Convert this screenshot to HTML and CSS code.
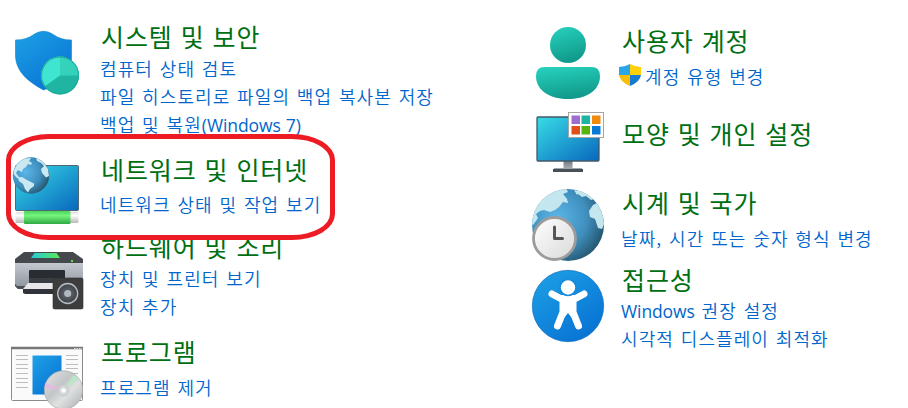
FILE: index.html
```html
<!DOCTYPE html>
<html lang="ko">
<head>
    <meta charset="UTF-8">
    <meta name="viewport" content="width=device-width, initial-scale=1.0">
    <title>제어판</title>
    <link rel="stylesheet" href="styles.css">
</head>
<body>

    <div class="panel">
        <div class="column">
            <div class="item system">
                <svg class="icon" viewBox="0 20 96 125">
                    <defs>
                        <linearGradient id="blue" x1="0" y1="0" x2="0.7" y2="1">
                            <stop offset="0" stop-color="#1ea2e6"/>
                            <stop offset="1" stop-color="#0873d4"/>
                        </linearGradient>
                    </defs>
                    <path d="M15.500 40Q26 40 33 35Q43.500 27.500 54 35Q61 40 71.500 40V60C71.500 77 58 85 43.500 90C29 82 15.500 72 15.500 55Z" fill="url(#blue)" stroke="#1181c9" stroke-width=".6"/>
                    <circle cx="60" cy="75.500" r="19" fill="#20b5a2"/>
                    <path d="M60 75.500L44.500 86.500A19 19 0 0 1 60 56.500Z" fill="#3fe5d0"/>
                    <path d="M60 75.500V56.500A19 19 0 0 1 79 75.500Z" fill="#34d1bb"/>
                    <circle cx="60" cy="75.500" r="18.500" fill="none" stroke="#1ba797"/>
                </svg>
                <div class="text">
                    <h2>시스템 및 보안</h2>
                    <a href="#">컴퓨터 상태 검토</a>
                    <a href="#">파일 히스토리로 파일의 백업 복사본 저장</a>
                    <a href="#">백업 및 복원<span class="latin">(Windows 7)</span></a>
                </div>
            </div>

            <div class="item network">
                <svg class="icon" viewBox="0 145 96 87">
                    <defs>
                        <linearGradient id="screen" x1="0" y1="0" x2="1" y2="1">
                            <stop offset="0" stop-color="#38dce6"/>
                            <stop offset="1" stop-color="#0867bd"/>
                        </linearGradient>
                        <linearGradient id="cable" x1="0" y1="0" x2="0" y2="1">
                            <stop offset="0" stop-color="#4fd45b"/>
                            <stop offset=".35" stop-color="#74f47c"/>
                            <stop offset="1" stop-color="#2fa945"/>
                        </linearGradient>
                        <linearGradient id="plug" x1="0" y1="0" x2="0" y2="1">
                            <stop offset="0" stop-color="#ddd"/>
                            <stop offset=".3" stop-color="#fff"/>
                            <stop offset="1" stop-color="#b8b8b8"/>
                        </linearGradient>
                        <radialGradient id="sea" cx=".35" cy=".4" r=".75">
                            <stop offset="0" stop-color="#5bb6e8"/>
                            <stop offset=".55" stop-color="#3f8fbd"/>
                            <stop offset="1" stop-color="#1e485d"/>
                        </radialGradient>
                    </defs>
                    <rect x="15.500" y="165.500" width="63" height="45" rx="1" fill="url(#screen)" stroke="#4c6873"/>
                    <rect x="15.500" y="212" width="63" height="11" rx="1.500" fill="url(#plug)"/>
                    <rect x="24" y="211" width="46.500" height="13" rx="1" fill="url(#cable)"/>
                    <circle cx="31" cy="175.500" r="18.200" fill="url(#sea)"/>
                    <path d="M14 170Q17 162 25 158.500L31 158L29 161L32 163L31 165L28 164L26 167L23 169L22 172L18 170L16 173L18 176L20 178L17 178L13.500 174ZM18 177.500L22 177L27 180L34 183.500L34 186L30 189L28 192.500L25 189L23 184L19 181Z" fill="#c9e8f2"/>
                    <path d="M36 158Q44 161 48 169L49 176L46 177.500L42 173L41 169L44 166L41 163L37 161Z" fill="#c9e8f2"/>
                </svg>
                <div class="text">
                    <h2>네트워크 및 인터넷</h2>
                    <a href="#">네트워크 상태 및 작업 보기</a>
                </div>
                <div class="highlight"></div>
            </div>

            <div class="item hardware">
                <svg class="icon" viewBox="0 232 96 98">
                    <defs>
                        <linearGradient id="metal" x1="0" y1="0" x2="0" y2="1">
                            <stop offset="0" stop-color="#c4c9d0"/>
                            <stop offset="1" stop-color="#8b919b"/>
                        </linearGradient>
                        <linearGradient id="glass" x1="0" y1="0" x2="1" y2="0">
                            <stop offset="0" stop-color="#26ccd9"/>
                            <stop offset="1" stop-color="#5be557"/>
                        </linearGradient>
                    </defs>
                    <path d="M15 263H83V287L80 289H18L15 286Z" fill="url(#metal)"/>
                    <path d="M24 252H73L83 259V263H15V259Z" fill="#45494e"/>
                    <path d="M15 284V286L18 289H28V286H17Z" fill="#4b4f55"/>
                    <path d="M34.500 253H56.500L60 258H31Z" fill="url(#glass)"/>
                    <rect x="71" y="260" width="2" height="2" fill="#5be33a"/>
                    <rect x="29" y="270" width="36" height="17" rx="1" fill="#292c31"/>
                    <rect x="29" y="278" width="36" height="6" fill="#3a3d43"/>
                    <path d="M28 283H60V289H23Z" fill="#e8e8ea"/>
                    <path d="M23 289H62V294H25L23 293Z" fill="#30343a"/>
                    <rect x="53" y="278" width="30" height="31" rx="1.500" fill="#3e3d3e" stroke="#303030" stroke-width=".6"/>
                    <circle cx="67.700" cy="293.500" r="10" fill="#484b50" stroke="#b6bec7" stroke-width="1.300"/>
                    <circle cx="67.700" cy="293.500" r="6.500" fill="#53575d"/>
                    <circle cx="67.700" cy="293.500" r="3.600" fill="#afb8c2"/>
                </svg>
                <div class="text">
                    <h2>하드웨어 및 소리</h2>
                    <a href="#">장치 및 프린터 보기</a>
                    <a href="#">장치 추가</a>
                </div>
            </div>

            <div class="item programs">
                <svg class="icon" viewBox="0 330 96 78">
                    <defs>
                        <linearGradient id="disc" x1="0" y1="0" x2="1" y2="1">
                            <stop offset="0" stop-color="#e4e6e6"/>
                            <stop offset=".4" stop-color="#c3c6c7"/>
                            <stop offset=".6" stop-color="#dfe1e1"/>
                            <stop offset="1" stop-color="#a9adaf"/>
                        </linearGradient>
                    </defs>
                    <rect x="11.500" y="347.500" width="71" height="53" rx="1" fill="#fafafa" stroke="#8b8b8b"/>
                    <path d="M11 348H83" stroke="#777" stroke-width="2.500"/>
                    <path d="M74 348.500H82" stroke="#ddd" stroke-dasharray="1.500 1"/>
                    <path d="M16 355.500H28M16 359.500H28M16 364.500H28M16 368.500H28M16 373.500H28M16 378.500H28M16 382.500H28M16 387.500H28M66 355.500H78M66 359.500H78M66 364.500H78M66 368.500H78M66 373.500H78" stroke="#bdbdbd"/>
                    <rect x="32.500" y="355.500" width="29" height="39" fill="url(#blue)"/>
                    <circle cx="63.500" cy="390" r="19.200" fill="url(#disc)" stroke="#a5a7a8" stroke-width=".7"/>
                    <path d="M63.500 390L45.500 383L44.500 388Z" fill="#e6b9e1"/>
                    <path d="M63.500 390L74 375L78 379Z" fill="#b7e8c4"/>
                    <circle cx="63.500" cy="390.500" r="5.500" fill="#d4d6d7" stroke="#bfc1c2" stroke-width=".7"/>
                    <circle cx="63.500" cy="390.500" r="2.300" fill="#fff"/>
                </svg>
                <div class="text">
                    <h2>프로그램</h2>
                    <a href="#">프로그램 제거</a>
                </div>
            </div>
        </div>

        <div class="column">
            <div class="item accounts">
                <svg class="icon" viewBox="521 20 96 83">
                    <defs>
                        <linearGradient id="teal" x1="0" y1="0" x2=".3" y2="1">
                            <stop offset="0" stop-color="#28d3bf"/>
                            <stop offset="1" stop-color="#119b8c"/>
                        </linearGradient>
                    </defs>
                    <circle cx="568" cy="45" r="18" fill="url(#teal)"/>
                    <path d="M544.500 67H591.500Q600 67 600 76C600 92 584 99 568 99S536 92 536 76Q536 67 544.500 67Z" fill="url(#teal)"/>
                </svg>
                <div class="text">
                    <h2>사용자 계정</h2>
                    <a href="#" class="admin">
                        <svg class="uac" viewBox="0 0 22 22">
                            <path d="M0 3Q6 3 11 0V11H0Z" fill="#2aa5e5"/>
                            <path d="M11 0Q16 3 22 3V11H11Z" fill="#ffcf08"/>
                            <path d="M0 11H11V22Q1 18 0 11Z" fill="#fabd0a"/>
                            <path d="M11 11H22Q21 18 11 22Z" fill="#147bd1"/>
                        </svg>
                        계정 유형 변경
                    </a>
                </div>
            </div>

            <div class="item appearance">
                <svg class="icon" viewBox="521 103 96 82">
                    <defs>
                        <linearGradient id="stand" x1="0" y1="0" x2="0" y2="1">
                            <stop offset="0" stop-color="#737b83"/>
                            <stop offset="1" stop-color="#b1b7bd"/>
                        </linearGradient>
                    </defs>
                    <rect x="563.500" y="161" width="9" height="9" fill="url(#stand)"/>
                    <path d="M553 169H583V172H553Z" fill="#484f55"/>
                    <path d="M554 168.500H582" stroke="#9da4aa"/>
                    <rect x="537" y="117" width="62" height="44" rx="1" fill="url(#screen)" stroke="#425a69" stroke-width="1.300"/>
                    <rect x="568.500" y="112.500" width="35" height="25" fill="#fff" stroke="#a5a5a5"/>
                    <path d="M571.500 115.500h8.500v8.500h-8.500z" fill="#9d6dd0"/>
                    <path d="M581.500 115.500h8.500v8.500h-8.500z" fill="#1fb4a2"/>
                    <path d="M592 115.500h8.500v8.500H592z" fill="#f08a0c"/>
                    <path d="M571.500 126h8.500v8.500h-8.500z" fill="#e05018"/>
                    <path d="M581.500 126h8.500v8.500h-8.500z" fill="#57b30d"/>
                    <path d="M592 126h8.500v8.500H592z" fill="#0879d4"/>
                </svg>
                <div class="text">
                    <h2>모양 및 개인 설정</h2>
                </div>
            </div>

            <div class="item clock">
                <svg class="icon" viewBox="521 185 96 79">
                    <defs>
                        <linearGradient id="dial" x1="0" y1="0" x2="1" y2="1">
                            <stop offset="0" stop-color="#fff"/>
                            <stop offset="1" stop-color="#d9d9d9"/>
                        </linearGradient>
                        <clipPath id="round"><circle cx="568" cy="225" r="36"/></clipPath>
                    </defs>
                    <circle cx="568" cy="225" r="36" fill="url(#sea)"/>
                    <g clip-path="url(#round)" fill="#c4e6ef">
                        <path d="M531 224Q534 206 546 195L556 190L566 188L568 192L563 194L567 199L568 203L563 202L559 207L555 210L550 212L547 211L544 210L540 211L536 214L538 218L536 221L533 225Z"/>
                        <path d="M578 194L582 197L586 196L591 200L595 199L597 203L593 205L589 211L590 217L595 219L598 228L602 229L605 222L603 205L594 194L583 188L578 190Z"/>
                        <path d="M574 190L580 191L577 195ZM556 196L560 194L562 197L558 199Z"/>
                    </g>
                    <circle cx="554.500" cy="238.500" r="21" fill="url(#dial)" stroke="#9c9c9c" stroke-width="2.800"/>
                    <path d="M554.500 227V238.500H562.500" fill="none" stroke="#555" stroke-width="3" stroke-linecap="round" stroke-linejoin="round"/>
                </svg>
                <div class="text">
                    <h2>시계 및 국가</h2>
                    <a href="#">날짜, 시간 또는 숫자 형식 변경</a>
                </div>
            </div>

            <div class="item access">
                <svg class="icon" viewBox="521 264 96 96">
                    <circle cx="568" cy="306" r="35.700" fill="url(#blue)" stroke="#0d70bd" stroke-width=".7"/>
                    <path d="M552 294L560.500 298.500H575.500L584 294M557.500 326L563 312V301H573V312L578.500 326" fill="none" stroke="#fff" stroke-width="7" stroke-linecap="round" stroke-linejoin="round"/>
                    <path d="M561 299H575V312L572 318L568 313L564 318L561 312Z" fill="#fff"/>
                    <circle cx="568" cy="287.500" r="8" fill="#fff" stroke="#1688db" stroke-width="1.600"/>
                </svg>
                <div class="text">
                    <h2>접근성</h2>
                    <a href="#"><span class="latin">Windows</span> 권장 설정</a>
                    <a href="#">시각적 디스플레이 최적화</a>
                </div>
            </div>
        </div>
    </div>

</body>
</html>
```

FILE: styles.css
```css
body {
    margin: 0;
    background-color: #fff;
    font-family: "Noto Sans CJK KR", sans-serif;
    font-weight: 350;
    overflow: hidden;
}
.panel {
    display: grid;
    grid-template-columns: 521px 387px;
    height: 388px;
    padding-top: 20px;
}
.column {
    display: flex;
    flex-direction: column;
}
.item {
    position: relative;
    display: flex;
    flex-shrink: 0;
    gap: 4px;
}
.icon {
    flex: none;
    width: 96px;
    height: 100%;
}
.text {
    margin-top: -1px;
    white-space: nowrap;
}
.item h2 {
    margin: 0 0 0 1px;
    color: #006f12;
    font-size: 25px;
    font-weight: 400;
    line-height: 34px;
    letter-spacing: 0.92px;
}
.item a {
    display: block;
    color: #0066cc;
    font-size: 18px;
    line-height: 28px;
    letter-spacing: 1.08px;
    word-spacing: 0.7px;
    text-decoration: none;
}
.item a:hover {
    text-decoration: underline;
}
.latin {
    font-family: "Open Sans", "Noto Sans", sans-serif;
    font-size: 17.5px;
    font-weight: 400;
    letter-spacing: -0.1px;
}
.system {
    height: 125px;
}
.system h2 {
    margin-bottom: 1px;
}
.network {
    height: 87px;
}
.network .text {
    padding-top: 8px;
}
.network h2 {
    margin-bottom: 4px;
}
.hardware {
    height: 98px;
}
.hardware .text {
    margin-top: -3px;
}
.hardware h2 {
    margin-bottom: 1px;
}
.programs {
    height: 78px;
}
.programs .text {
    padding-top: 5px;
}
.programs h2 {
    margin-bottom: 5px;
}
.accounts {
    height: 83px;
}
.accounts .text {
    padding-top: 4px;
}
.accounts h2 {
    margin-bottom: 5px;
}
.item .admin {
    display: flex;
    align-items: center;
    gap: 4px;
    margin-left: -2px;
}
.uac {
    width: 22px;
    height: 22px;
    margin-bottom: 3px;
}
.appearance {
    height: 82px;
}
.appearance .text {
    padding-top: 14px;
}
.clock {
    height: 79px;
}
.clock .text {
    padding-top: 1px;
}
.clock h2 {
    margin-bottom: 5px;
}
.access {
    height: 96px;
}
.access .text {
    margin-top: -2px;
}
.access h2 {
    margin-bottom: 1px;
}
.access a {
    line-height: 27px;
}
.highlight {
    position: absolute;
    top: -11px;
    left: 6px;
    box-sizing: border-box;
    width: 329px;
    height: 106px;
    border: 5px solid #ed1c24;
    border-radius: 43px / 26px;
    z-index: 1;
}
```
